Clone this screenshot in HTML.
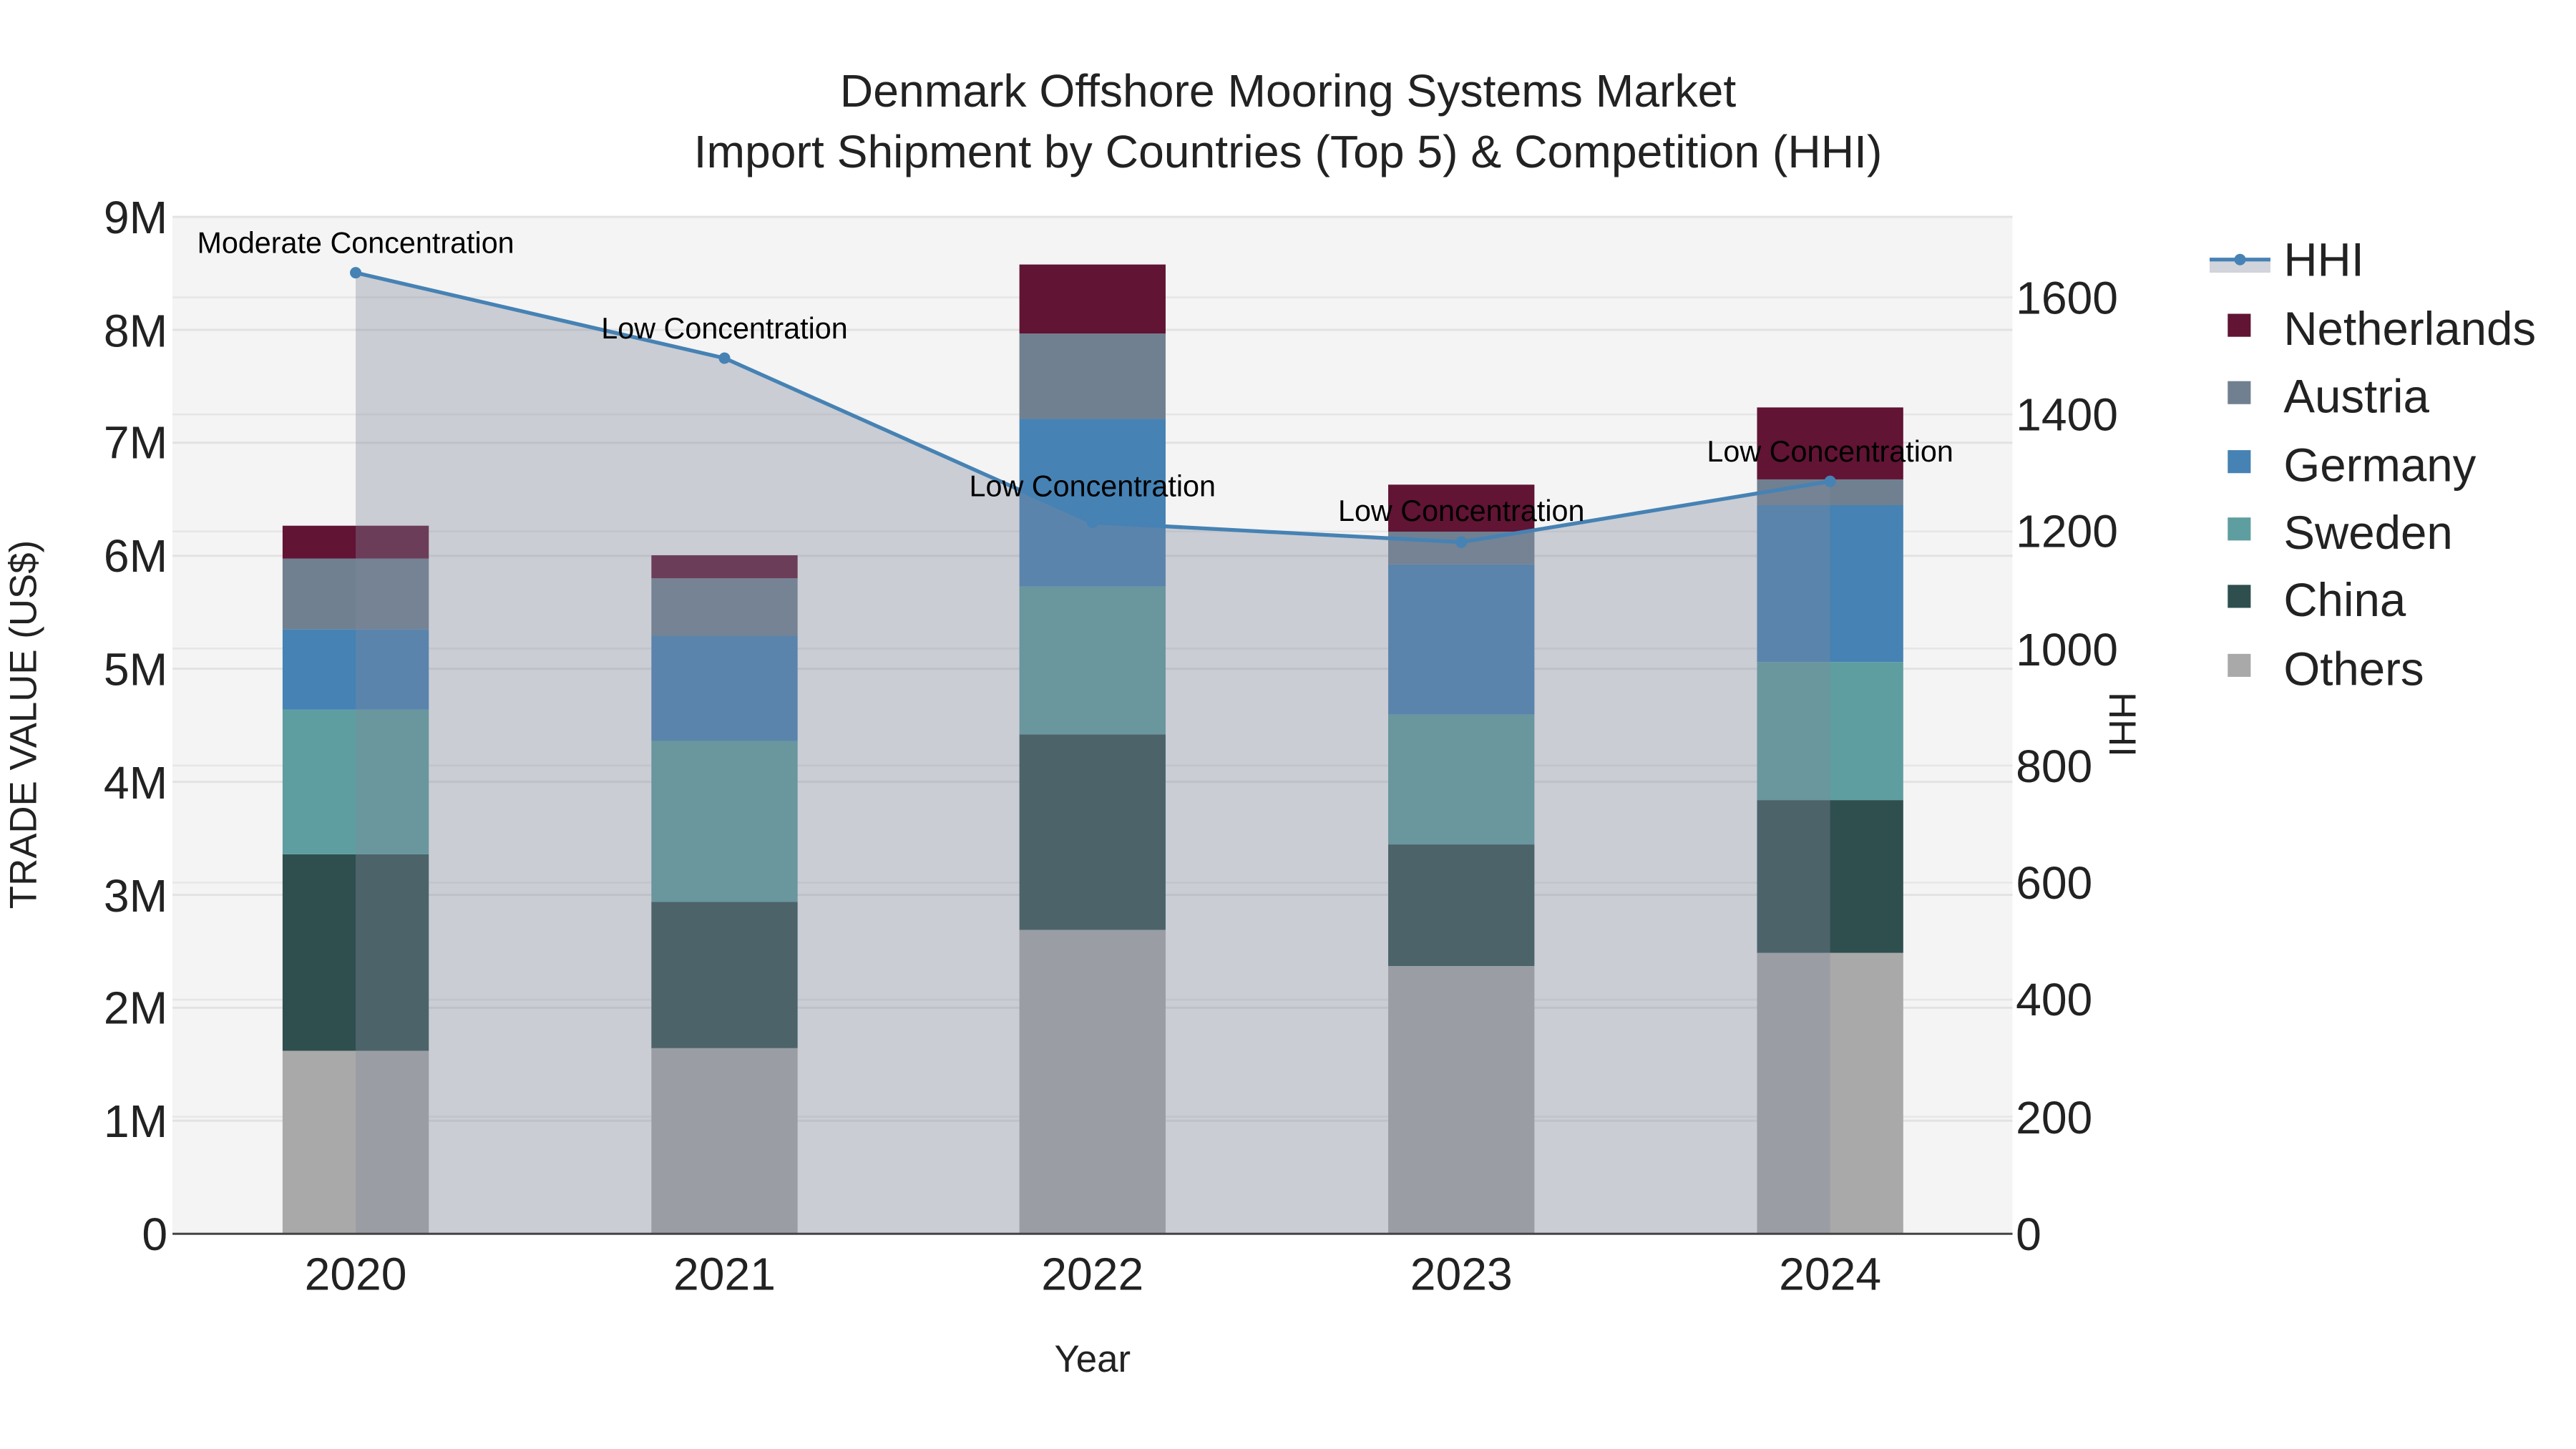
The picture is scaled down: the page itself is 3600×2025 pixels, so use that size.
<!DOCTYPE html>
<html><head><meta charset="utf-8">
<style>
html,body{margin:0;padding:0;background:#fff;}
svg{display:block;}
text{font-family:"Liberation Sans",sans-serif;}
</style></head>
<body>
<svg width="3600" height="2025" viewBox="0 0 1568 882" xmlns="http://www.w3.org/2000/svg">
<rect x="0" y="0" width="1568" height="882" fill="#fff"/>
<rect x="105" y="132" width="1120" height="619" fill="#f4f4f4"/>
<g stroke="#e2e2e2" stroke-width="1.3">
<line x1="105" x2="1225" y1="682.2" y2="682.2"/>
<line x1="105" x2="1225" y1="613.4" y2="613.4"/>
<line x1="105" x2="1225" y1="544.7" y2="544.7"/>
<line x1="105" x2="1225" y1="475.9" y2="475.9"/>
<line x1="105" x2="1225" y1="407.1" y2="407.1"/>
<line x1="105" x2="1225" y1="338.3" y2="338.3"/>
<line x1="105" x2="1225" y1="269.5" y2="269.5"/>
<line x1="105" x2="1225" y1="200.8" y2="200.8"/>
<line x1="105" x2="1225" y1="132" y2="132"/>
</g>
<g stroke="#e6e6e6" stroke-width="1.1">
<line x1="105" x2="1225" y1="679.75" y2="679.75"/>
<line x1="105" x2="1225" y1="608.5" y2="608.5"/>
<line x1="105" x2="1225" y1="537.25" y2="537.25"/>
<line x1="105" x2="1225" y1="466" y2="466"/>
<line x1="105" x2="1225" y1="394.75" y2="394.75"/>
<line x1="105" x2="1225" y1="323.5" y2="323.5"/>
<line x1="105" x2="1225" y1="252.25" y2="252.25"/>
<line x1="105" x2="1225" y1="181" y2="181"/>
</g>
<g>
<rect x="172" y="639.6" width="89" height="111.4" fill="#a9a9a9"/>
<rect x="172" y="520" width="89" height="119.6" fill="#2f4f4f"/>
<rect x="172" y="432" width="89" height="88" fill="#5f9ea0"/>
<rect x="172" y="383" width="89" height="49" fill="#4682b4"/>
<rect x="172" y="340" width="89" height="43" fill="#708090"/>
<rect x="172" y="320" width="89" height="20" fill="#611434"/>
<rect x="396.5" y="638" width="89" height="113" fill="#a9a9a9"/>
<rect x="396.5" y="549" width="89" height="89" fill="#2f4f4f"/>
<rect x="396.5" y="451" width="89" height="98" fill="#5f9ea0"/>
<rect x="396.5" y="387" width="89" height="64" fill="#4682b4"/>
<rect x="396.5" y="352" width="89" height="35" fill="#708090"/>
<rect x="396.5" y="338" width="89" height="14" fill="#611434"/>
<rect x="620.5" y="566" width="89" height="185" fill="#a9a9a9"/>
<rect x="620.5" y="447" width="89" height="119" fill="#2f4f4f"/>
<rect x="620.5" y="357" width="89" height="90" fill="#5f9ea0"/>
<rect x="620.5" y="255" width="89" height="102" fill="#4682b4"/>
<rect x="620.5" y="203" width="89" height="52" fill="#708090"/>
<rect x="620.5" y="161" width="89" height="42" fill="#611434"/>
<rect x="845" y="588" width="89" height="163" fill="#a9a9a9"/>
<rect x="845" y="514" width="89" height="74" fill="#2f4f4f"/>
<rect x="845" y="435" width="89" height="79" fill="#5f9ea0"/>
<rect x="845" y="343.6" width="89" height="91.4" fill="#4682b4"/>
<rect x="845" y="323.6" width="89" height="20" fill="#708090"/>
<rect x="845" y="295" width="89" height="28.6" fill="#611434"/>
<rect x="1069.5" y="580" width="89" height="171" fill="#a9a9a9"/>
<rect x="1069.5" y="487" width="89" height="93" fill="#2f4f4f"/>
<rect x="1069.5" y="403" width="89" height="84" fill="#5f9ea0"/>
<rect x="1069.5" y="307.5" width="89" height="95.5" fill="#4682b4"/>
<rect x="1069.5" y="291.8" width="89" height="15.7" fill="#708090"/>
<rect x="1069.5" y="248" width="89" height="43.8" fill="#611434"/>
</g>
<polygon points="216.5,166 441,218 665,318 889.5,330 1114,293 1114,751 216.5,751" fill="rgb(128,135,156)" fill-opacity="0.36"/>
<line x1="105" x2="1225" y1="751" y2="751" stroke="#444" stroke-width="1.3"/>
<polyline points="216.5,166 441,218 665,318 889.5,330 1114,293" fill="none" stroke="#4682b4" stroke-width="2.3"/>
<g fill="#4682b4">
<circle cx="216.5" cy="166" r="3.5"/><circle cx="441" cy="218" r="3.5"/><circle cx="665" cy="318" r="3.5"/><circle cx="889.5" cy="330" r="3.5"/><circle cx="1114" cy="293" r="3.5"/>
</g>
<g font-size="18" fill="#000" text-anchor="middle">
<text x="216.5" y="154">Moderate Concentration</text>
<text x="441" y="206">Low Concentration</text>
<text x="665" y="302">Low Concentration</text>
<text x="889.5" y="317">Low Concentration</text>
<text x="1114" y="281">Low Concentration</text>
</g>
<g font-size="28" fill="#222" text-anchor="middle">
<text x="784" y="65">Denmark Offshore Mooring Systems Market</text>
<text x="784" y="102">Import Shipment by Countries (Top 5) &amp; Competition (HHI)</text>
</g>
<g font-size="28" fill="#222" text-anchor="end">
<text x="102" y="761">0</text>
<text x="102" y="692">1M</text>
<text x="102" y="623">2M</text>
<text x="102" y="555">3M</text>
<text x="102" y="486">4M</text>
<text x="102" y="417">5M</text>
<text x="102" y="348">6M</text>
<text x="102" y="279">7M</text>
<text x="102" y="211">8M</text>
<text x="102" y="142">9M</text>
</g>
<g font-size="28" fill="#222" text-anchor="start">
<text x="1227" y="761">0</text>
<text x="1227" y="690">200</text>
<text x="1227" y="618">400</text>
<text x="1227" y="547">600</text>
<text x="1227" y="476">800</text>
<text x="1227" y="405">1000</text>
<text x="1227" y="333">1200</text>
<text x="1227" y="262">1400</text>
<text x="1227" y="191">1600</text>
</g>
<g font-size="28" fill="#222" text-anchor="middle">
<text x="216.5" y="785">2020</text>
<text x="441" y="785">2021</text>
<text x="665" y="785">2022</text>
<text x="889.5" y="785">2023</text>
<text x="1114" y="785">2024</text>
</g>
<text x="665" y="835" font-size="23" fill="#222" text-anchor="middle">Year</text>
<text transform="translate(22,441) rotate(-90)" font-size="23" fill="#222" text-anchor="middle">TRADE VALUE (US$)</text>
<text transform="translate(1284,441) rotate(90)" font-size="23" fill="#222" text-anchor="middle">HHI</text>
<rect x="1345" y="158" width="37" height="8" fill="rgb(128,135,156)" fill-opacity="0.36"/>
<line x1="1345" x2="1382" y1="158" y2="158" stroke="#4682b4" stroke-width="2.3"/>
<circle cx="1363.5" cy="158" r="3.5" fill="#4682b4"/>
<g>
<rect x="1356" y="191" width="14" height="14" fill="#611434"/>
<rect x="1356" y="232" width="14" height="14" fill="#708090"/>
<rect x="1356" y="274" width="14" height="14" fill="#4682b4"/>
<rect x="1356" y="315" width="14" height="14" fill="#5f9ea0"/>
<rect x="1356" y="356" width="14" height="14" fill="#2f4f4f"/>
<rect x="1356" y="398" width="14" height="14" fill="#a9a9a9"/>
</g>
<g font-size="28.5" fill="#222">
<text x="1390" y="168">HHI</text>
<text x="1390" y="210">Netherlands</text>
<text x="1390" y="251">Austria</text>
<text x="1390" y="293">Germany</text>
<text x="1390" y="334">Sweden</text>
<text x="1390" y="375">China</text>
<text x="1390" y="417">Others</text>
</g>
</svg>
</body></html>
